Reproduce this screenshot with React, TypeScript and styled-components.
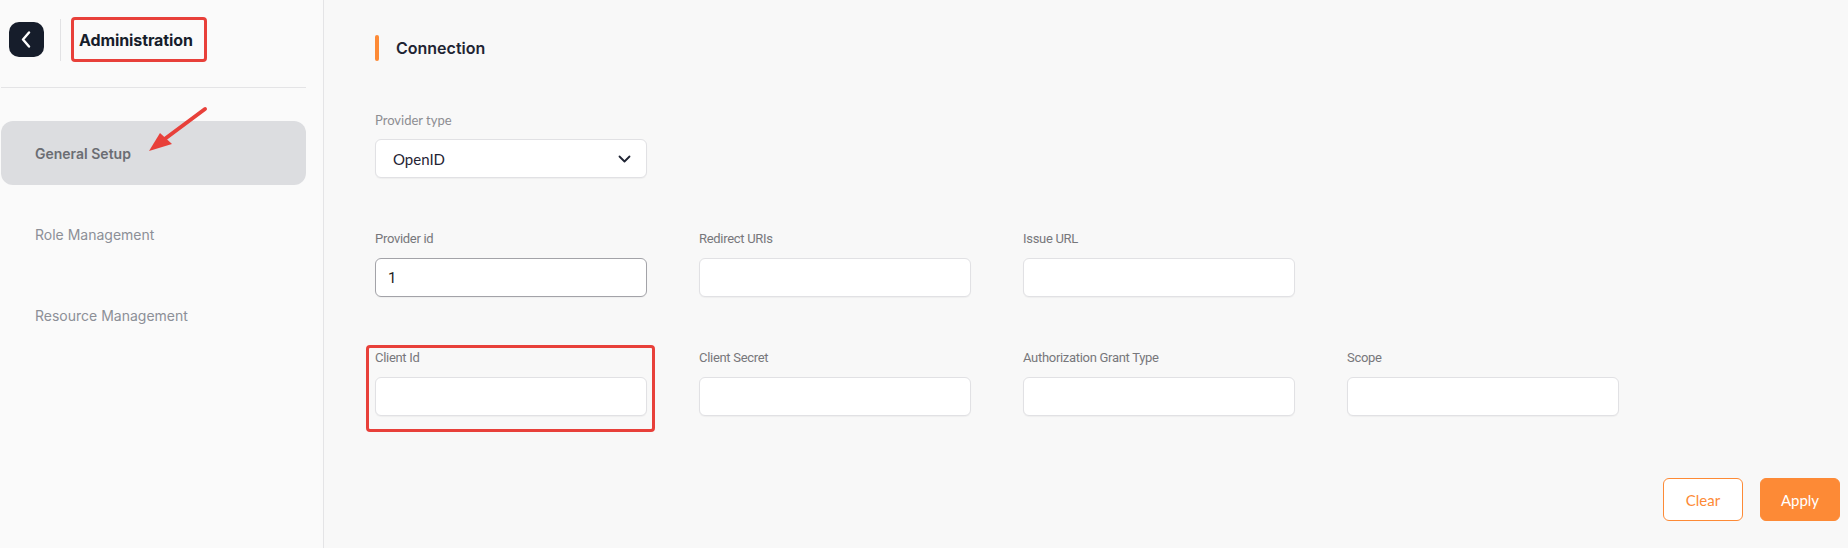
import React from "react";
import styled, { createGlobalStyle } from "styled-components";

const Global = createGlobalStyle`
  html, body { margin: 0; padding: 0; }
  body { font-family: Inter, "Noto Sans", sans-serif; background: #f8f8f8; }
  #root { height: 548px; }
  * { box-sizing: border-box; }
`;

const Page = styled.div`
  display: flex;
  height: 548px;
  width: 1848px;
  background: #f8f8f8;
  overflow: hidden;
`;

const Sidebar = styled.aside`
  position: relative;
  width: 324px;
  flex: none;
  background: #fafafa;
  border-right: 1px solid #e4e4e6;
  padding: 0 17px 0 1px;
`;

const SideHeader = styled.div`
  height: 88px;
  display: flex;
  align-items: center;
  padding: 0 0 8px 8px;
  border-bottom: 1px solid #e4e4e6;
`;

const BackButton = styled.button`
  width: 35px;
  height: 35px;
  border: none;
  border-radius: 10px;
  background: #161d2b;
  display: flex;
  align-items: center;
  justify-content: center;
  padding: 0 1px 0 0;
`;

const VDivider = styled.div`
  width: 1px;
  height: 42px;
  background: #e2e2e4;
  margin: 0 18px 0 16px;
`;

const TitleWrap = styled.div`
  position: relative;
`;

const Title = styled.h1`
  margin: 0;
  font-size: 16px;
  font-weight: 700;
  color: #161d2b;
  letter-spacing: -0.1px;
`;

const Highlight = styled.div<{ $t: number; $r: number; $b: number; $l: number }>`
  position: absolute;
  top: ${(p) => p.$t}px;
  right: ${(p) => p.$r}px;
  bottom: ${(p) => p.$b}px;
  left: ${(p) => p.$l}px;
  border: 3px solid #e8403a;
  border-radius: 4px;
  pointer-events: none;
`;

const Nav = styled.nav`
  display: flex;
  flex-direction: column;
  gap: 17px;
  padding-top: 33px;
`;

const NavItem = styled.div<{ $active?: boolean }>`
  height: 64px;
  display: flex;
  align-items: center;
  padding-left: 34px;
  border-radius: 12px;
  font-size: 14px;
  font-weight: ${(p) => (p.$active ? 600 : 400)};
  color: ${(p) => (p.$active ? "#6b6d73" : "#8c8f97")};
  background: ${(p) => (p.$active ? "#dcdde0" : "transparent")};
`;

const ArrowSvg = styled.svg`
  position: absolute;
  left: 142px;
  top: 101px;
  overflow: visible;
`;

const Main = styled.main`
  flex: 1;
  padding: 35px 8px 0 51px;
  display: flex;
  flex-direction: column;
`;

const SectionTitle = styled.div`
  display: flex;
  align-items: center;
  gap: 17px;
  height: 26px;
`;

const Accent = styled.span`
  width: 4px;
  height: 26px;
  border-radius: 2px;
  background: #fd8a36;
`;

const SectionText = styled.h2`
  margin: 0;
  font-size: 16px;
  font-weight: 600;
  color: #1f2433;
`;

const Row = styled.div<{ $mt: number }>`
  display: grid;
  grid-template-columns: repeat(4, 272px);
  column-gap: 52px;
  margin-top: ${(p) => p.$mt}px;
`;

const Field = styled.div`
  position: relative;
  display: flex;
  flex-direction: column;
  gap: 11px;
`;

const Label = styled.label<{ $lato?: boolean }>`
  font-family: ${(p) => (p.$lato ? "Lato, sans-serif" : "Roboto, sans-serif")};
  font-size: 13px;
  line-height: 16px;
  color: ${(p) => (p.$lato ? "#8d8d92" : "#77777b")};
  letter-spacing: ${(p) => (p.$lato ? "0" : "-0.3px")};
`;

const Input = styled.div<{ $focused?: boolean }>`
  height: 39px;
  background: #fff;
  border: 1px solid ${(p) => (p.$focused ? "#a3a3a8" : "#e1e1e4")};
  border-radius: 6px;
  box-shadow: 0 1px 1px rgba(0, 0, 0, 0.04);
  display: flex;
  align-items: center;
  padding: 0 12px;
  font-family: Roboto, sans-serif;
  font-size: 15px;
  color: #222;
`;

const Select = styled(Input)`
  justify-content: space-between;
  padding: 0 15px 0 17px;
  font-family: Lato, sans-serif;
  font-size: 15px;
  color: #1f2433;
`;

const Actions = styled.div`
  display: flex;
  justify-content: flex-end;
  gap: 17px;
  margin-top: 62px;
`;

const Btn = styled.button<{ $primary?: boolean }>`
  width: 80px;
  height: 43px;
  border-radius: 6px;
  font-family: Lato, sans-serif;
  font-size: 15px;
  border: 1px solid #fd8a36;
  color: ${(p) => (p.$primary ? "#fff" : "#fd8a36")};
  background: ${(p) => (p.$primary ? "#fd8a36" : "#fff")};
`;

export default function App() {
  return (
    <>
      <Global />
      <Page>
        <Sidebar>
          <SideHeader>
            <BackButton>
              <svg width="10" height="17" viewBox="0 0 10 17" fill="none" stroke="#fff" strokeWidth="2.4" strokeLinecap="round" strokeLinejoin="round">
                <path d="M8 1.5L2 8.5l6 7" />
              </svg>
            </BackButton>
            <VDivider />
            <TitleWrap>
              <Title>Administration</Title>
              <Highlight $t={-13} $r={-14} $b={-12} $l={-8} />
            </TitleWrap>
          </SideHeader>
          <Nav>
            <NavItem $active>General Setup</NavItem>
            <NavItem>Role Management</NavItem>
            <NavItem>Resource Management</NavItem>
          </Nav>
          <ArrowSvg width="80" height="60" viewBox="0 0 80 60">
            <line x1="63" y1="8" x2="20" y2="40" stroke="#e8403a" strokeWidth="4" strokeLinecap="round" />
            <polygon points="7,50 18,32 30,43" fill="#e8403a" />
          </ArrowSvg>
        </Sidebar>
        <Main>
          <SectionTitle>
            <Accent />
            <SectionText>Connection</SectionText>
          </SectionTitle>
          <Row $mt={51}>
            <Field>
              <Label $lato>Provider type</Label>
              <Select>
                <span>OpenID</span>
                <svg width="13" height="8" viewBox="0 0 13 8" fill="none" stroke="#1f2433" strokeWidth="1.8" strokeLinecap="round" strokeLinejoin="round">
                  <path d="M1.5 1.5l5 5 5-5" />
                </svg>
              </Select>
            </Field>
          </Row>
          <Row $mt={53}>
            <Field>
              <Label>Provider id</Label>
              <Input $focused>1</Input>
            </Field>
            <Field>
              <Label>Redirect URIs</Label>
              <Input />
            </Field>
            <Field>
              <Label>Issue URL</Label>
              <Input />
            </Field>
          </Row>
          <Row $mt={53}>
            <Field>
              <Label>Client Id</Label>
              <Input />
              <Highlight $t={-5} $r={-8} $b={-16} $l={-9} />
            </Field>
            <Field>
              <Label>Client Secret</Label>
              <Input />
            </Field>
            <Field>
              <Label>Authorization Grant Type</Label>
              <Input />
            </Field>
            <Field>
              <Label>Scope</Label>
              <Input />
            </Field>
          </Row>
          <Actions>
            <Btn>Clear</Btn>
            <Btn $primary>Apply</Btn>
          </Actions>
        </Main>
      </Page>
    </>
  );
}
